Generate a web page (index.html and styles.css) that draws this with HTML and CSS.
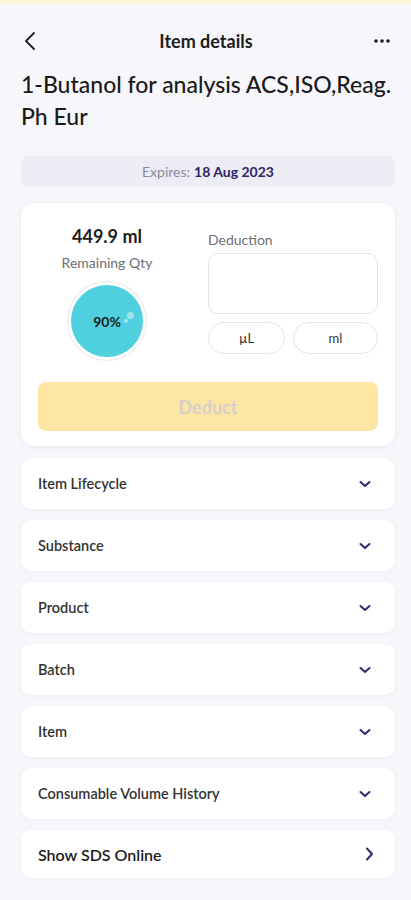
FILE: index.html
```html
<!DOCTYPE html>
<html lang="en">
<head>
    <meta charset="UTF-8">
    <meta name="viewport" content="width=device-width, initial-scale=1.0">
    <title>Item details</title>
    <link rel="stylesheet" href="styles.css">
</head>
<body>

    <div class="top-strip"></div>

    <div class="header">
        <button class="icon-button">
            <svg width="14" height="20" viewBox="0 0 14 20"><path d="M11 2 L3 10 L11 18" fill="none" stroke="#1c1c1c" stroke-width="1.8" stroke-linecap="round" stroke-linejoin="round"/></svg>
        </button>
        <h2>Item details</h2>
        <button class="icon-button">
            <svg width="18" height="6" viewBox="0 0 18 6"><circle cx="3" cy="3" r="1.8" fill="#1c1c1c"/><circle cx="9" cy="3" r="1.8" fill="#1c1c1c"/><circle cx="15" cy="3" r="1.8" fill="#1c1c1c"/></svg>
        </button>
    </div>

    <div class="content">
        <h1 class="item-title">1-Butanol for analysis ACS,ISO,Reag. Ph Eur</h1>

        <div class="expires">Expires: <b>18 Aug 2023</b></div>

        <div class="qty-card">
            <div class="qty-row">
                <div class="remaining">
                    <div class="remaining-value">449.9 ml</div>
                    <div class="remaining-label">Remaining Qty</div>
                    <div class="gauge">
                        <span>90%</span>
                        <i class="bubble"></i>
                        <i class="bubble small"></i>
                    </div>
                </div>
                <div class="deduction">
                    <label>Deduction</label>
                    <div class="deduction-input"></div>
                    <div class="units">
                        <button class="unit">µL</button>
                        <button class="unit">ml</button>
                    </div>
                </div>
            </div>
            <button class="deduct-button" disabled>Deduct</button>
        </div>

        <div class="sections" id="sections">
            <!-- rows inserted below -->
        </div>
    </div>

    <script>
        const sections = [
            { name: "Item Lifecycle", arrow: "down" },
            { name: "Substance", arrow: "down" },
            { name: "Product", arrow: "down" },
            { name: "Batch", arrow: "down" },
            { name: "Item", arrow: "down" },
            { name: "Consumable Volume History", arrow: "down" },
            { name: "Show SDS Online", arrow: "right" }
        ];

        const downIcon = '<svg width="14" height="10" viewBox="0 0 14 10"><path d="M2.5 3 L7 7 L11.5 3" fill="none" stroke="#35296f" stroke-width="2" stroke-linecap="round" stroke-linejoin="round"/></svg>';
        const rightIcon = '<svg width="10" height="16" viewBox="0 0 10 16"><path d="M3 2.5 L8 8 L3 13.5" fill="none" stroke="#35296f" stroke-width="2" stroke-linecap="round" stroke-linejoin="round"/></svg>';

        const container = document.getElementById('sections');

        sections.forEach(section => {
            const row = document.createElement('div');
            row.className = 'section-row';
            if (section.arrow === 'right') row.classList.add('link');

            const name = document.createElement('span');
            name.textContent = section.name;
            row.appendChild(name);

            const arrow = document.createElement('span');
            arrow.className = 'arrow';
            arrow.innerHTML = section.arrow === 'right' ? rightIcon : downIcon;
            row.appendChild(arrow);

            container.appendChild(row);
        });
    </script>

</body>
</html>
```

FILE: styles.css
```css
body {
    margin: 0;
    background-color: #f7f7fb;
    color: #1c1c1c;
    font-family: Lato, "Noto Sans", sans-serif;
}

.top-strip {
    height: 4px;
    background-color: #fdf5d6;
}

.header {
    display: flex;
    align-items: center;
    justify-content: space-between;
    padding: 22px 17px 0 18px;
    height: 30px;
}

.header h2 {
    margin: 0;
    font-size: 18px;
    font-weight: 700;
}

.icon-button {
    background: none;
    border: none;
    padding: 0;
    width: 24px;
    height: 24px;
    display: flex;
    align-items: center;
    justify-content: center;
    cursor: pointer;
}

.content {
    padding: 0 16px 24px 21px;
}

.item-title {
    margin: 12px 0 0;
    font-size: 23px;
    line-height: 32px;
    font-weight: 500;
    color: #1a1a1a;
}

.expires {
    margin-top: 24px;
    height: 31px;
    border-radius: 8px;
    background-color: #ececf4;
    display: flex;
    align-items: center;
    justify-content: center;
    font-size: 14px;
    color: #8a8a94;
}

.expires b {
    color: #2e2566;
    margin-left: 4px;
}

.qty-card {
    margin-top: 16px;
    background-color: #fff;
    border-radius: 14px;
    box-shadow: 0 1px 6px rgba(40, 40, 80, 0.08);
    padding: 21px 17px 15px;
}

.qty-row {
    display: grid;
    grid-template-columns: 138px 1fr;
    column-gap: 32px;
}

.remaining {
    display: flex;
    flex-direction: column;
    align-items: center;
}

.remaining-value {
    font-size: 18px;
    font-weight: 700;
    line-height: 24px;
}

.remaining-label {
    font-size: 14px;
    color: #6d6d75;
    margin-top: 6px;
}

.gauge {
    position: relative;
    margin-top: 11px;
    width: 72px;
    height: 72px;
    border-radius: 50%;
    background-color: #4fd0df;
    border: 3px solid #fff;
    box-shadow: 0 0 0 1px #e6e6ee;
    display: flex;
    align-items: center;
    justify-content: center;
    font-size: 14px;
    font-weight: 700;
}

.bubble {
    position: absolute;
    right: 9px;
    top: 27px;
    width: 7px;
    height: 7px;
    border-radius: 50%;
    background-color: rgba(255, 255, 255, 0.45);
}

.bubble.small {
    right: 15px;
    top: 34px;
    width: 4px;
    height: 4px;
}

.deduction label {
    display: block;
    font-size: 14px;
    color: #6d6d75;
    margin-top: 7px;
}

.deduction-input {
    margin-top: 5px;
    height: 59px;
    border: 1px solid #e4e4ec;
    border-radius: 10px;
}

.units {
    display: grid;
    grid-template-columns: 77px 1fr;
    gap: 8px;
    margin-top: 8px;
}

.unit {
    height: 32px;
    border: 1px solid #e4e4ec;
    border-radius: 16px;
    background-color: #fff;
    font-family: inherit;
    font-size: 13px;
    color: #333;
}

.deduct-button {
    display: block;
    width: 100%;
    height: 49px;
    margin-top: 22px;
    border: none;
    border-radius: 8px;
    background-color: #fde5a4;
    color: #d6d0c8;
    font-family: inherit;
    font-size: 18px;
    font-weight: 700;
}

.sections {
    display: flex;
    flex-direction: column;
    gap: 11px;
    margin-top: 12px;
}

.section-row {
    display: flex;
    align-items: center;
    justify-content: space-between;
    height: 51px;
    padding: 0 23px 0 17px;
    background-color: #fff;
    border-radius: 10px;
    box-shadow: 0 1px 4px rgba(40, 40, 80, 0.06);
    font-size: 14.5px;
    font-weight: 600;
    color: #333;
}

.section-row.link {
    height: 48px;
    font-size: 16px;
    color: #1c1c1c;
    padding-right: 21px;
}

.arrow {
    display: flex;
}
```
